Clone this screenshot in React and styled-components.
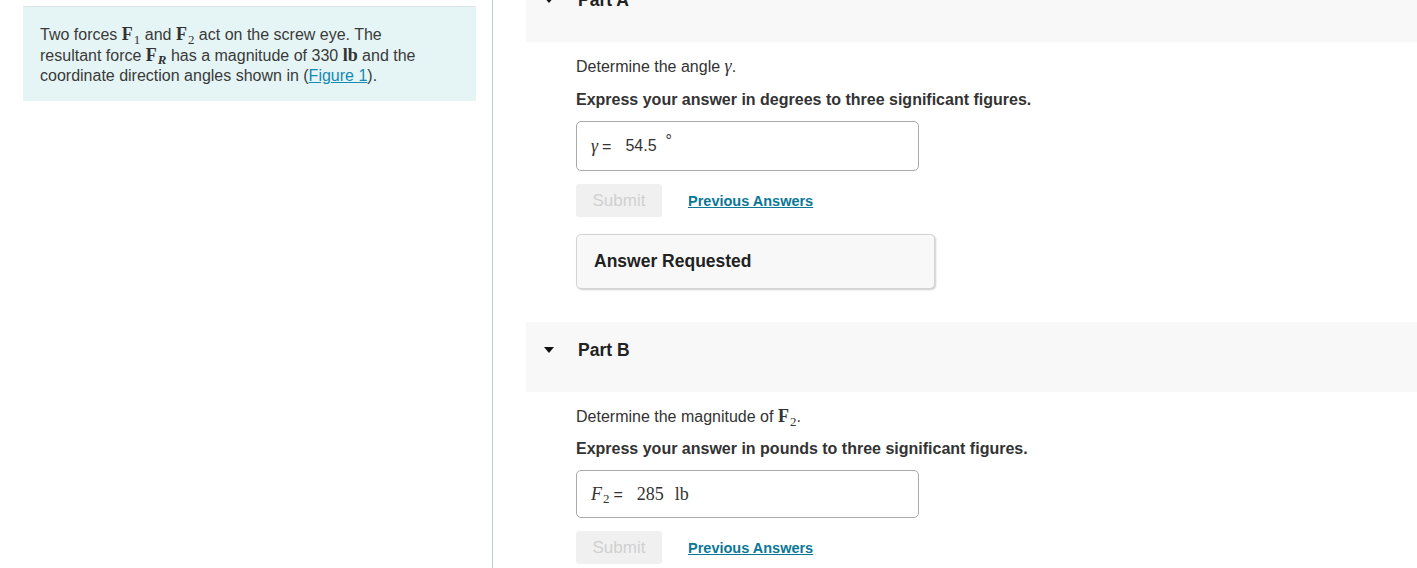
import React from "react";
import styled, { createGlobalStyle } from "styled-components";

const GlobalStyle = createGlobalStyle`
  html, body {
    margin: 0;
    padding: 0;
    background: #fff;
  }
  body {
    font-family: "Liberation Sans", Arial, sans-serif;
    color: #333;
    overflow: hidden;
  }
`;

const Page = styled.div`
  display: flex;
  width: 1417px;
  height: 568px;
  overflow: hidden;
`;

const LeftColumn = styled.aside`
  box-sizing: border-box;
  width: 493px;
  flex-shrink: 0;
  padding: 6px 16px 0 23px;
  border-right: 1px solid #bccbd9;
`;

const Intro = styled.div`
  background: #e5f5f5;
  border-top: 1px solid #dce3e3;
  padding: 18px 36px 14px 17px;
  font-size: 16px;
  line-height: 20.5px;
  color: #3a3a3a;
`;

const Link = styled.a`
  color: #1589b0;
  text-decoration: underline;
`;

const MathBold = styled.span`
  font-family: "Liberation Serif", "Times New Roman", serif;
  font-weight: bold;
  font-size: 18px;
  line-height: 1;
  color: #333;
`;

const MathText = styled.span`
  font-family: "Liberation Serif", "Times New Roman", serif;
  font-style: ${(p) => (p.$italic ? "italic" : "normal")};
  font-size: ${(p) => p.$size || "18px"};
  line-height: 1;
  margin-left: ${(p) => p.$indent || 0}px;
`;

const Sub = styled.sub`
  font-size: 0.72em;
  line-height: 0;
  vertical-align: -0.3em;
  margin-left: 1px;
  font-style: ${(p) => (p.$italic ? "italic" : "normal")};
  font-weight: ${(p) => (p.$italic ? "bold" : "normal")};
`;

const RightColumn = styled.main`
  flex: 1;
  margin-top: -28px;
  padding-left: 33px;
`;

const PartHeader = styled.div`
  box-sizing: border-box;
  display: flex;
  align-items: flex-start;
  height: 70px;
  background: #f8f8f8;
  padding: 18px 0 0 18px;
  gap: 24px;
  font-size: 17.5px;
  line-height: 20px;
  font-weight: bold;
  color: #222;
`;

const Caret = styled.span`
  width: 0;
  height: 0;
  margin-top: 7px;
  border-left: 5px solid transparent;
  border-right: 5px solid transparent;
  border-top: 6px solid #111;
`;

const PartBody = styled.section`
  display: flex;
  flex-direction: column;
  align-items: flex-start;
  padding: 15px 0 33px 50px;
`;

const Prompt = styled.p`
  margin: 0;
  font-size: 16px;
  line-height: 20px;
  color: #333;
  font-weight: ${(p) => (p.$bold ? "bold" : "normal")};
  margin-top: ${(p) => p.$gap || 0}px;
`;

const AnswerBox = styled.div`
  box-sizing: border-box;
  display: flex;
  align-items: center;
  width: 343px;
  height: ${(p) => p.$h}px;
  margin-top: 11px;
  padding-left: 14px;
  border: 1px solid #aaa;
  border-radius: 5px;
  font-size: 16px;
  color: #333;
`;

const Symbol = styled.span`
  display: inline-flex;
  align-items: baseline;
  gap: 4px;
  margin-right: ${(p) => p.$space}px;
`;

const Degree = styled.span`
  font-size: 16px;
  position: relative;
  top: -5px;
  margin-left: 9px;
`;

const ActionRow = styled.div`
  display: flex;
  align-items: center;
  gap: 26px;
  margin-top: 13px;
`;

const SubmitButton = styled.button`
  width: 86px;
  height: 33px;
  border: none;
  border-radius: 3px;
  background: #f0f0f0;
  color: #d0d0d0;
  font-family: "Liberation Sans", Arial, sans-serif;
  font-size: 17px;
  padding: 0;
`;

const PrevLink = styled.a`
  color: #0a7797;
  font-weight: bold;
  font-size: 14.5px;
  text-decoration: underline;
`;

const Feedback = styled.div`
  box-sizing: border-box;
  width: 359px;
  height: 55px;
  margin-top: 17px;
  display: flex;
  align-items: center;
  padding-left: 17px;
  background: #f8f8f8;
  border: 1px solid #d3d3d3;
  border-radius: 5px;
  box-shadow: 1px 1px 2px rgba(0, 0, 0, 0.2);
  font-size: 17.5px;
  font-weight: bold;
  color: #222;
`;

const Part = ({ title, children }) => (
  <>
    <PartHeader>
      <Caret />
      {title}
    </PartHeader>
    <PartBody>{children}</PartBody>
  </>
);

export default function App() {
  return (
    <>
      <GlobalStyle />
      <Page>
        <LeftColumn>
          <Intro>
            Two forces{" "}
            <MathBold>
              F<Sub>1</Sub>
            </MathBold>{" "}
            and{" "}
            <MathBold>
              F<Sub>2</Sub>
            </MathBold>{" "}
            act on the screw eye. The resultant force{" "}
            <MathBold>
              F<Sub $italic>R</Sub>
            </MathBold>{" "}
            has a magnitude of 330 <MathBold>lb</MathBold> and the coordinate
            direction angles shown in (<Link href="#">Figure 1</Link>).
          </Intro>
        </LeftColumn>

        <RightColumn>
          <Part title="Part A">
            <Prompt>
              Determine the angle <MathText $italic>γ</MathText>.
            </Prompt>
            <Prompt $bold $gap={13}>
              Express your answer in degrees to three significant figures.
            </Prompt>
            <AnswerBox $h={50}>
              <Symbol $space={14}>
                <MathText $italic>γ</MathText>=
              </Symbol>
              <span>
                54.5<Degree>°</Degree>
              </span>
            </AnswerBox>
            <ActionRow>
              <SubmitButton disabled>Submit</SubmitButton>
              <PrevLink href="#">Previous Answers</PrevLink>
            </ActionRow>
            <Feedback>Answer Requested</Feedback>
          </Part>

          <Part title="Part B">
            <Prompt>
              Determine the magnitude of{" "}
              <MathBold>
                F<Sub>2</Sub>
              </MathBold>
              .
            </Prompt>
            <Prompt $bold $gap={12}>
              Express your answer in pounds to three significant figures.
            </Prompt>
            <AnswerBox $h={48}>
              <Symbol $space={14}>
                <MathText $italic>
                  F<Sub>2</Sub>
                </MathText>
                <span> =</span>
              </Symbol>
              <MathText>285</MathText>
              <MathText $indent={11}>lb</MathText>
            </AnswerBox>
            <ActionRow>
              <SubmitButton disabled>Submit</SubmitButton>
              <PrevLink href="#">Previous Answers</PrevLink>
            </ActionRow>
          </Part>
        </RightColumn>
      </Page>
    </>
  );
}
